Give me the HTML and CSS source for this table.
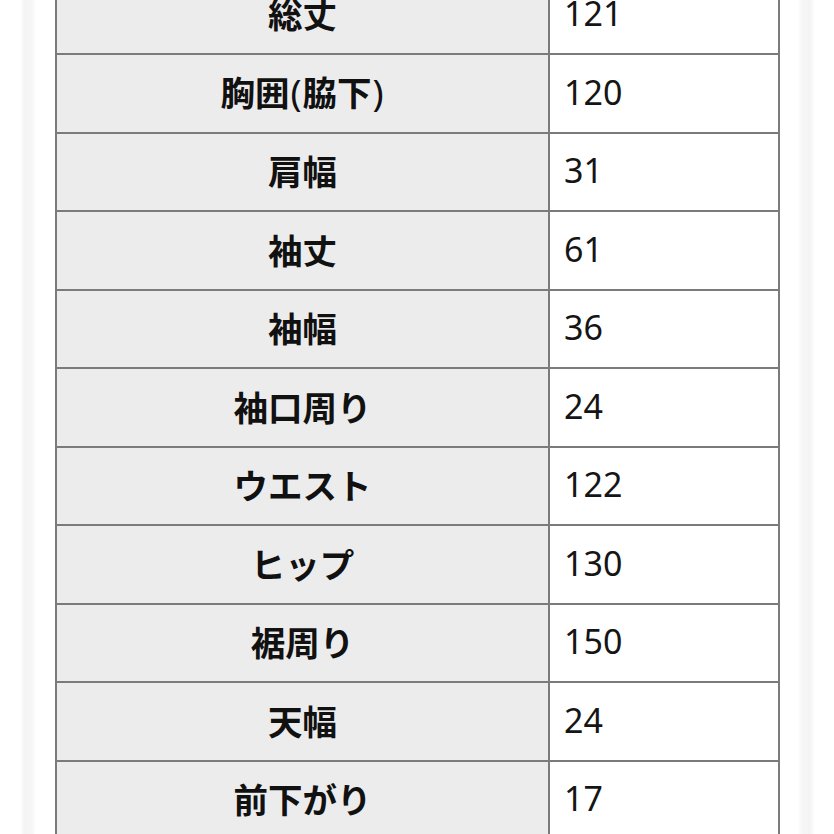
FILE: index.html
```html
<!DOCTYPE html>
<html lang="ja">
<head>
<meta charset="utf-8">
<title>サイズ表</title>
<link rel="stylesheet" href="styles.css">
</head>
<body>
<div class="page">
  <table class="size-table">
    <tbody>
      <tr><th>総丈</th><td>121</td></tr>
      <tr><th>胸囲<span class="paren">(</span>脇下<span class="paren">)</span></th><td>120</td></tr>
      <tr><th>肩幅</th><td>31</td></tr>
      <tr><th>袖丈</th><td>61</td></tr>
      <tr><th>袖幅</th><td>36</td></tr>
      <tr><th>袖口周り</th><td>24</td></tr>
      <tr><th>ウエスト</th><td>122</td></tr>
      <tr><th>ヒップ</th><td>130</td></tr>
      <tr><th>裾周り</th><td>150</td></tr>
      <tr><th>天幅</th><td>24</td></tr>
      <tr><th>前下がり</th><td>17</td></tr>
      <tr><th>&nbsp;</th><td>&nbsp;</td></tr>
    </tbody>
  </table>
</div>
</body>
</html>
```

FILE: styles.css
```css
html, body {
  margin: 0;
  padding: 0;
  height: 100%;
  overflow: hidden;
}

body {
  background:
    linear-gradient(to right,
      #ffffff 0, #ffffff 20px, #f4f4f4 24px, #f6f6f6 32px, #ffffff 36px,
      #ffffff 798px, #f6f6f6 802px, #f4f4f4 810px, #ffffff 815px, #ffffff 100%);
  font-family: "Noto Sans", "Noto Sans CJK JP", sans-serif;
  color: #111111;
}

.page {
  padding-left: 55px;
  margin-top: -25.5px;
}

.size-table {
  width: 725px;
  border-collapse: collapse;
  border: 2px solid #7b7b7b;
  table-layout: fixed;
}

.size-table th,
.size-table td {
  height: 78.5px;
  border: 2px solid #7b7b7b;
  font-size: 34.5px;
  line-height: 1;
  padding: 0 0 3px 0;
  box-sizing: border-box;
}

.size-table th {
  width: 493px;
  background: #ececec;
  font-family: "Noto Sans CJK JP", "Noto Sans", sans-serif;
  font-weight: 700;
  text-align: center;
  color: #111111;
}

.size-table th .paren {
  font-family: "Noto Sans", sans-serif;
  font-weight: 400;
  font-size: 37px;
  padding: 0 1px;
}

.size-table td {
  background: #ffffff;
  text-align: left;
  padding-left: 14px;
  font-size: 34px;
  font-weight: 400;
  color: #151515;
}
```
